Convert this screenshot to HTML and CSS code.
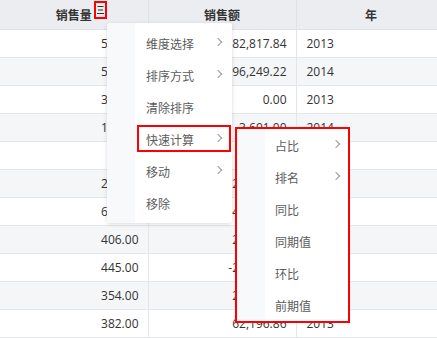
FILE: index.html
```html
<!DOCTYPE html>
<html lang="zh-CN">
<head>
    <meta charset="UTF-8">
    <title>销售数据</title>
    <link rel="stylesheet" href="styles.css">
</head>
<body>
    <div class="grid-wrap">
        <table class="grid">
            <colgroup>
                <col class="c1"><col class="c2"><col class="c3">
            </colgroup>
            <thead>
                <tr>
                    <th>销售量<span class="hd-anchor"><span class="hd-icon">
                        <svg width="9" height="10" viewBox="0 0 9 10"><path d="M1.5 1.5h6M2 5h5M1 8.5h7" stroke="#333" stroke-width="1.2"/></svg>
                    </span></span></th>
                    <th>销售额</th>
                    <th>年</th>
                </tr>
            </thead>
            <tbody>
                <tr><td class="num">512.00</td><td class="num">82,817.84</td><td>2013</td></tr>
                <tr><td class="num">538.00</td><td class="num">96,249.22</td><td>2014</td></tr>
                <tr><td class="num">376.00</td><td class="num">0.00</td><td>2013</td></tr>
                <tr><td class="num">164.00</td><td class="num">3,691.00</td><td>2014</td></tr>
                <tr><td class="num"></td><td class="num">-</td><td></td></tr>
                <tr><td class="num">283.00</td><td class="num">24,836.10</td><td>2013</td></tr>
                <tr><td class="num">617.00</td><td class="num">48,120.55</td><td>2014</td></tr>
                <tr><td class="num">406.00</td><td class="num">27,364.20</td><td>2013</td></tr>
                <tr><td class="num">445.00</td><td class="num">-21,508.40</td><td>2014</td></tr>
                <tr><td class="num">354.00</td><td class="num">22,917.63</td><td>2013</td></tr>
                <tr><td class="num">382.00</td><td class="num">62,196.86</td><td>2013</td></tr>
            </tbody>
        </table>

        <ul class="menu menu-main">
            <li class="item"><span>维度选择</span><i class="arrow"></i></li>
            <li class="item"><span>排序方式</span><i class="arrow"></i></li>
            <li class="item"><span>清除排序</span></li>
            <li class="item active"><span>快速计算</span><i class="arrow"></i></li>
            <li class="item"><span>移动</span><i class="arrow"></i></li>
            <li class="item"><span>移除</span></li>
        </ul>

        <ul class="menu menu-sub">
            <li class="item"><span>占比</span><i class="arrow"></i></li>
            <li class="item"><span>排名</span><i class="arrow"></i></li>
            <li class="item"><span>同比</span></li>
            <li class="item"><span>同期值</span></li>
            <li class="item"><span>环比</span></li>
            <li class="item"><span>前期值</span></li>
        </ul>
    </div>
</body>
</html>
```

FILE: styles.css
```css
html, body {
    margin: 0;
    padding: 0;
    width: 100%;
    height: 100%;
    overflow: hidden;
}
body {
    font-family: "Open Sans", "Noto Sans CJK SC", sans-serif;
    font-size: 12px;
    color: #333;
    background-color: #fff;
}
.grid-wrap {
    position: relative;
    width: 446px;
}
.grid {
    table-layout: fixed;
    border-collapse: collapse;
    width: 446px;
}
.grid col.c1, .grid col.c2 {
    width: 148px;
}
.grid col.c3 {
    width: 150px;
}
.grid th {
    height: 29px;
    padding: 0;
    background-color: #ebedf0;
    font-weight: bold;
    text-align: center;
    border-right: 1px solid #dfe2e6;
    border-bottom: 1px solid #dfe2e6;
}
.grid td {
    height: 27px;
    padding: 0 10px;
    border-right: 1px solid #e4e6ea;
    border-bottom: 1px solid #e4e6ea;
    white-space: nowrap;
    overflow: hidden;
}
.grid td.num {
    text-align: right;
    padding-right: 9px;
}
.grid tbody tr:nth-child(even) td {
    background-color: #f5f6f8;
}
.hd-anchor {
    position: relative;
}
.hd-icon {
    position: absolute;
    left: 2px;
    top: -6px;
    width: 9px;
    height: 14px;
    border: 2px solid #f00;
    display: flex;
    align-items: center;
    justify-content: center;
}
.hd-icon svg {
    display: block;
}
.menu {
    position: absolute;
    list-style: none;
    margin: 0;
    background-color: #fff;
    font-family: "Noto Sans CJK SC", sans-serif;
    font-size: 12px;
    color: #5c5c5c;
}
.menu-main {
    left: 107px;
    top: 23px;
    width: 125px;
    padding: 4px 0;
    border-radius: 3px;
    box-shadow: 0 1px 4px rgba(0, 0, 0, 0.15);
    background: linear-gradient(to right, #f8f9fa 28px, #fff 28px);
}
.menu-sub {
    left: 235px;
    top: 127px;
    width: 111px;
    padding: 0;
    border: 2px solid #f00;
    background: linear-gradient(to right, #f8f9fa 28px, #fff 28px);
}
.item {
    position: relative;
    height: 32px;
    display: flex;
    align-items: center;
    padding-left: 39px;
}
.menu-sub .item {
    padding-left: 38px;
}
.item.active::after {
    content: "";
    position: absolute;
    left: 30px;
    right: 1px;
    top: 2px;
    bottom: 3px;
    border: 2px solid #f00;
}
.arrow {
    position: absolute;
    right: 11px;
    top: 12px;
    width: 5px;
    height: 5px;
    border-top: 1px solid #999;
    border-right: 1px solid #999;
    transform: rotate(45deg);
}
.menu-sub .arrow {
    right: 9px;
}
```
